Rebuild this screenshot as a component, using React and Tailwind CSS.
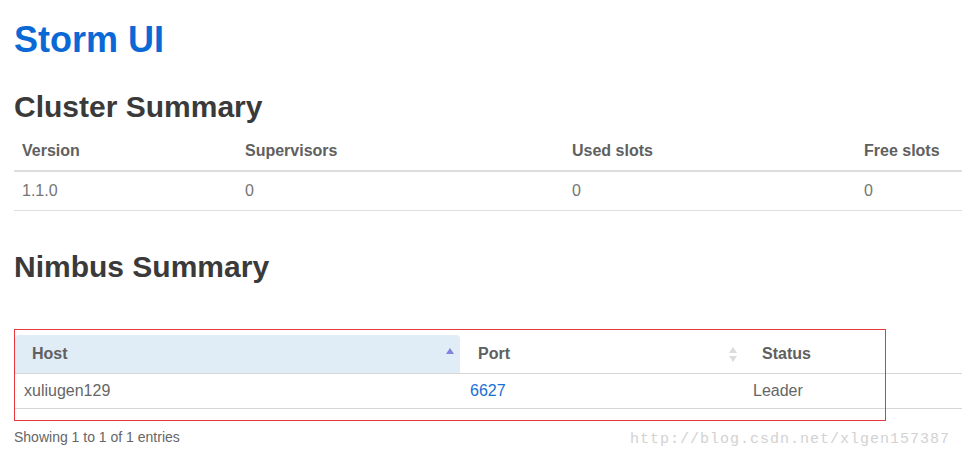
import React from 'react'

const cluster = {
  headers: ['Version', 'Supervisors', 'Used slots', 'Free slots'],
  widths: ['w-[223px]', 'w-[327px]', 'w-[292px]', ''],
  row: ['1.1.0', '0', '0', '0'],
}

// little sort markers from the DataTables header
function SortAsc() {
  return (
    <svg width="8" height="6" viewBox="0 0 8 6" className="absolute right-[6px] top-[13px]">
      <path d="M4 0 L8 6 L0 6 Z" fill="#7f84dc" />
    </svg>
  )
}

function SortBoth() {
  return (
    <svg width="8" height="15" viewBox="0 0 8 15" className="absolute right-[8px] top-[12px]">
      <path d="M4 0 L8 6 L0 6 Z" fill="#dcdcdc" />
      <path d="M0 9 L8 9 L4 15 Z" fill="#dcdcdc" />
    </svg>
  )
}

export default function App() {
  return (
    <div className="relative w-[962px] h-[462px] overflow-hidden bg-white font-['Liberation_Sans',Arial,sans-serif]">
      <div className="pl-[14px]">
        {/* Title */}
        <h1 className="pt-[20px] text-[36px] leading-[40px] font-bold text-[#0b69d6]">Storm UI</h1>

        {/* Cluster Summary */}
        <h2 className="mt-[30px] text-[30px] leading-[33px] font-bold text-[#3a3a3a]">Cluster Summary</h2>
        <table className="mt-[9px] w-[948px] table-fixed border-collapse text-[16px] leading-[22px]">
          <thead>
            <tr className="border-b-2 border-[#dddddd]">
              {cluster.headers.map((h, i) => (
                <th key={h} className={`${cluster.widths[i]} p-[8px] text-left font-bold text-[#606060]`}>{h}</th>
              ))}
            </tr>
          </thead>
          <tbody>
            <tr className="border-b border-[#dddddd]">
              {cluster.row.map((v, i) => (
                <td key={i} className="p-[8px] text-[#757575]">{v}</td>
              ))}
            </tr>
          </tbody>
        </table>

        {/* Nimbus Summary */}
        <h2 className="mt-[39px] text-[30px] leading-[33px] font-bold text-[#3a3a3a]">Nimbus Summary</h2>
        <table className="mt-[52px] ml-[1px] w-[947px] table-fixed border-collapse text-[16px] leading-[22px]">
          <thead>
            <tr className="border-b border-[#d6d6d6]">
              <th className="relative w-[445px] py-[8px] pl-[17px] text-left font-bold text-[#606060] bg-[#e0ecf6] rounded-t-[4px]">
                Host
                <SortAsc />
              </th>
              <th className="relative w-[285px] py-[8px] pl-[18px] text-left font-bold text-[#606060]">
                Port
                <SortBoth />
              </th>
              <th className="py-[8px] pl-[17px] text-left font-bold text-[#606060]">Status</th>
            </tr>
          </thead>
          <tbody>
            <tr className="border-b border-[#d6d6d6]">
              <td className="py-[6px] pl-[9px] text-[#666666]">xuliugen129</td>
              <td className="py-[6px] pl-[10px]">
                <a className="text-[#1a6fd6]">6627</a>
              </td>
              <td className="py-[6px] pl-[8px] text-[#666666]">Leader</td>
            </tr>
          </tbody>
        </table>

        <p className="mt-[18px] text-[14px] leading-[20px] text-[#666666]">Showing 1 to 1 of 1 entries</p>
      </div>

      {/* annotation box drawn over the nimbus table */}
      <div className="absolute left-[14px] top-[329px] w-[872px] h-[92px] border border-[#e8383d]" />

      {/* blog watermark */}
      <div className="absolute left-[630px] top-[431px] text-[15px] leading-[18px] tracking-[1px] text-[#d2d2d2] font-['Liberation_Mono',monospace]">
        http://blog.csdn.net/xlgen157387
      </div>
    </div>
  )
}
